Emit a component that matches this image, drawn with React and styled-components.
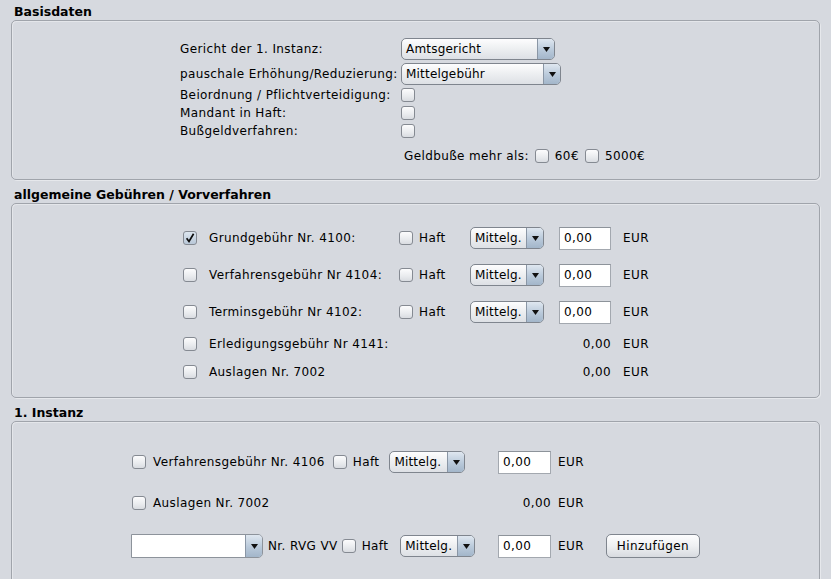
import React from "react"
import styled, { createGlobalStyle } from "styled-components"

const GlobalStyle = createGlobalStyle`
    html, body {
        margin: 0;
        padding: 0;
        background: #d6d9df;
        overflow: hidden;
    }
    body {
        font-family: "DejaVu Sans", "Liberation Sans", sans-serif;
        font-size: 12px;
        color: #000;
    }
`

export default function App() {
    return (
        <Page>
            <GlobalStyle />

            <Section>
                <Title>Basisdaten</Title>
                <Panel $h={160} $pt={16} $pl={168}>
                    <FormRow $h={24}>
                        <Label $w={221}>Gericht der 1. Instanz:</Label>
                        <Combo value="Amtsgericht" w={154} />
                    </FormRow>
                    <FormRow $h={24} $mt={1}>
                        <Label $w={221}>pauschale Erhöhung/Reduzierung:</Label>
                        <Combo value="Mittelgebühr" w={160} />
                    </FormRow>
                    <FormRow $h={18}>
                        <Label $w={221}>Beiordnung / Pflichtverteidigung:</Label>
                        <CheckBox />
                    </FormRow>
                    <FormRow $h={18}>
                        <Label $w={221}>Mandant in Haft:</Label>
                        <CheckBox />
                    </FormRow>
                    <FormRow $h={18}>
                        <Label $w={221}>Bußgeldverfahren:</Label>
                        <CheckBox />
                    </FormRow>
                    <FormRow $h={24} $mt={4}>
                        <Inline $ml={224} $gap={6}>
                            <span>Geldbuße mehr als:</span>
                            <CheckBox />
                            <span>60€</span>
                            <CheckBox />
                            <span>5000€</span>
                        </Inline>
                    </FormRow>
                </Panel>
            </Section>

            <Section>
                <Title>allgemeine Gebühren / Vorverfahren</Title>
                <Panel $h={195} $pt={21} $pl={171}>
                    {fees.map((fee) => (
                        <FormRow key={fee.name} $h={fee.h} $mt={fee.mt}>
                            <Cell $w={26}><CheckBox checked={fee.checked} /></Cell>
                            <Cell $w={190}>{fee.name}</Cell>
                            {fee.haft ? (
                                <>
                                    <Cell $w={71}>
                                        <Inline $gap={6}><CheckBox />Haft</Inline>
                                    </Cell>
                                    <Cell $w={89}><Combo value="Mittelg." w={74} /></Cell>
                                    <Field $w={52}>0,00</Field>
                                </>
                            ) : (
                                <Amount $w={212}>0,00</Amount>
                            )}
                            <Unit $ml={12}>EUR</Unit>
                        </FormRow>
                    ))}
                </Panel>
            </Section>

            <Section>
                <Title>1. Instanz</Title>
                <Panel $h={170} $pt={27} $pl={119}>
                    <FormRow $h={26}>
                        <Lead>
                            <Inline $gap={7} $ml={1}><CheckBox />Verfahrensgebühr Nr. 4106</Inline>
                            <Inline $gap={6} $ml={8}><CheckBox />Haft</Inline>
                            <Combo value="Mittelg." w={76} ml={10} />
                        </Lead>
                        <Field $w={53}>0,00</Field>
                        <Unit $ml={7}>EUR</Unit>
                    </FormRow>
                    <FormRow $h={26} $mt={15}>
                        <Lead $w={314}>
                            <Inline $gap={7} $ml={1}><CheckBox />Auslagen Nr. 7002</Inline>
                        </Lead>
                        <Amount $w={106}>0,00</Amount>
                        <Unit $ml={7}>EUR</Unit>
                    </FormRow>
                    <FormRow $h={26} $mt={17}>
                        <Lead>
                            <EditCombo>
                                <EditText />
                                <ArrowBox><Arrow /></ArrowBox>
                            </EditCombo>
                            <Inline $ml={5}>Nr. RVG VV</Inline>
                            <Inline $gap={6} $ml={4}><CheckBox />Haft</Inline>
                            <Combo value="Mittelg." w={75} ml={12} />
                        </Lead>
                        <Field $w={53}>0,00</Field>
                        <Unit $ml={7}>EUR</Unit>
                        <Button>Hinzufügen</Button>
                    </FormRow>
                </Panel>
            </Section>
        </Page>
    )
}

const fees = [
    { name: "Grundgebühr Nr. 4100:", haft: true, checked: true, h: 26, mt: 0 },
    { name: "Verfahrensgebühr Nr 4104:", haft: true, h: 26, mt: 11 },
    { name: "Terminsgebühr Nr 4102:", haft: true, h: 26, mt: 11 },
    { name: "Erledigungsgebühr Nr 4141:", haft: false, h: 22, mt: 8 },
    { name: "Auslagen Nr. 7002", haft: false, h: 22, mt: 6 },
]

function Combo({ value, w, ml }) {
    return (
        <ComboBox $w={w} $ml={ml}>
            <ComboValue>{value}</ComboValue>
            <ArrowBox><Arrow /></ArrowBox>
        </ComboBox>
    )
}

function Arrow() {
    return (
        <svg width="7" height="5" viewBox="0 0 7 5">
            <polygon points="0,0 7,0 3.5,5" fill="#111" />
        </svg>
    )
}

function CheckBox({ checked }) {
    return (
        <Box $checked={checked}>
            {checked && (
                <svg width="12" height="12" viewBox="0 0 12 12">
                    <path d="M2.6 6.2 L5 9.4 L9.6 1.8" fill="none" stroke="#0d0d0d" strokeWidth="1.7" />
                </svg>
            )}
        </Box>
    )
}

const Page = styled.div`
    display: flex;
    flex-direction: column;
    gap: 3px;
    letter-spacing: 0.38px;
`
const Section = styled.section`
    display: flex;
    flex-direction: column;
`
const Title = styled.div`
    height: 20px;
    box-sizing: border-box;
    padding: 5px 0 0 14px;
    line-height: 14px;
    font-size: 12.5px;
    font-weight: bold;
    letter-spacing: 0;
`
const Panel = styled.div`
    height: ${({ $h }) => $h}px;
    box-sizing: border-box;
    margin: 0 11px;
    padding: ${({ $pt }) => $pt}px 0 0 ${({ $pl }) => $pl}px;
    border: 1px solid #a0a4ab;
    border-radius: 5px;
    box-shadow: 1px 1px 0 #e6e8ec, inset 1px 1px 0 #e4e6ea;
    display: flex;
    flex-direction: column;
`
const FormRow = styled.div`
    display: flex;
    align-items: center;
    height: ${({ $h }) => $h}px;
    margin-top: ${({ $mt }) => $mt || 0}px;
    white-space: nowrap;
`
const Label = styled.div`
    width: ${({ $w }) => $w}px;
    flex-shrink: 0;
`
const Cell = styled.div`
    width: ${({ $w }) => $w}px;
    flex-shrink: 0;
    display: flex;
    align-items: center;
`
const Lead = styled.div`
    width: ${({ $w }) => $w || 367}px;
    flex-shrink: 0;
    display: flex;
    align-items: center;
`
const Inline = styled.div`
    display: flex;
    align-items: center;
    gap: ${({ $gap }) => $gap ?? 7}px;
    margin-left: ${({ $ml }) => $ml || 0}px;
`
const Box = styled.div`
    width: 14px;
    height: 14px;
    box-sizing: border-box;
    flex-shrink: 0;
    border: 1px solid #858a92;
    border-radius: 3px;
    background: ${({ $checked }) =>
        $checked
            ? "linear-gradient(#dde6ef, #b9c8d8)"
            : "linear-gradient(#fcfcfd, #e9ebee 60%, #d9dce1)"};
    display: flex;
    align-items: center;
    justify-content: center;
`
const ComboBox = styled.div`
    width: ${({ $w }) => $w}px;
    height: 22px;
    box-sizing: border-box;
    flex-shrink: 0;
    margin-left: ${({ $ml }) => $ml || 0}px;
    border: 1px solid #7f858e;
    border-radius: 5px;
    background: linear-gradient(#fdfdfe, #eef0f2 45%, #dde0e5);
    display: flex;
    overflow: hidden;
`
const ComboValue = styled.div`
    flex: 1;
    padding-left: 4px;
    line-height: 20px;
    letter-spacing: 0.2px;
`
const ArrowBox = styled.div`
    width: 16px;
    flex-shrink: 0;
    border-left: 1px solid #8a96a5;
    background: linear-gradient(#dfe7f0, #b9c9da 55%, #a3b6ca);
    display: flex;
    align-items: center;
    justify-content: center;
`
const EditCombo = styled.div`
    width: 132px;
    height: 24px;
    box-sizing: border-box;
    flex-shrink: 0;
    display: flex;
    border: 1px solid #8d939b;
    border-radius: 0 5px 5px 0;
    overflow: hidden;
`
const EditText = styled.div`
    flex: 1;
    background: #fff;
`
const Field = styled.div`
    width: ${({ $w }) => $w}px;
    height: 23px;
    box-sizing: border-box;
    flex-shrink: 0;
    padding-left: 4px;
    line-height: 21px;
    background: #fff;
    border: 1px solid #a3a8af;
    border-top-color: #8d939a;
`
const Amount = styled.div`
    width: ${({ $w }) => $w}px;
    flex-shrink: 0;
    text-align: right;
`
const Unit = styled.div`
    margin-left: ${({ $ml }) => $ml}px;
`
const Button = styled.div`
    width: 94px;
    height: 24px;
    box-sizing: border-box;
    margin-left: 22px;
    border: 1px solid #7f858e;
    border-radius: 5px;
    background: linear-gradient(#fdfdfe, #eef0f2 50%, #d8dbe0);
    text-align: center;
    line-height: 22px;
`
